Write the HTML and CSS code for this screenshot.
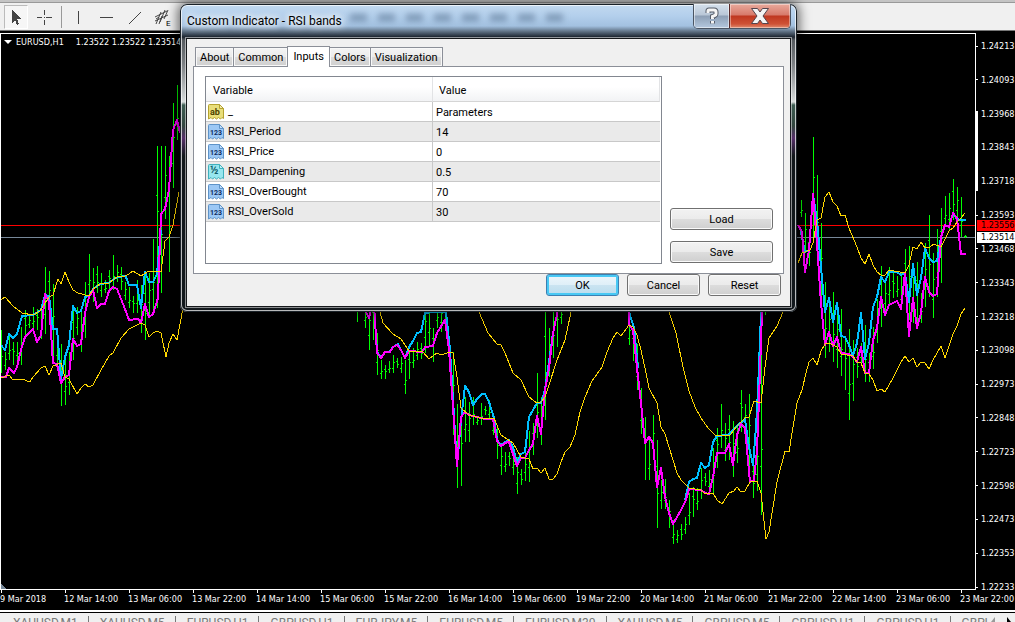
FILE: index.html
```html
<!DOCTYPE html>
<html lang="en">
<head>
    <meta charset="UTF-8">
    <meta name="viewport" content="width=device-width, initial-scale=1.0">
    <title>EURUSD,H1</title>
    <link rel="stylesheet" href="styles.css">
</head>
<body>

    <!-- Icon shapes used in the inputs table -->
    <svg class="sprite" aria-hidden="true">
        <symbol id="page" viewBox="0 0 16 16">
            <path class="page-fill" d="M.5 1.5q0-1 1-1h10l4 4v10l-1.500-1-1.500 1.500-2-1.500-2 1.500-2-1.500-2 1.500-1.500-1.500-2.500 1.500z"/>
            <path class="page-fold" d="M11.500.5v4h4z"/>
        </symbol>
    </svg>

    <!-- Drawing toolbar -->
    <div class="toolbar">
        <button class="tool active" aria-label="Cursor">
            <svg width="24" height="24" viewBox="0 0 24 24"><path fill="#444" d="M7 4v13l3-3 2 5 2-1-2-5h4z"/></svg>
        </button>
        <button class="tool" aria-label="Crosshair">
            <svg width="24" height="24" viewBox="0 0 24 24"><path d="M5 12.500h5M14 12.500h6M12.500 5v5M12.500 15v5M12 12.500h1"/></svg>
        </button>
        <span class="divider"></span>
        <button class="tool" aria-label="Vertical line">
            <svg width="24" height="24" viewBox="0 0 24 24"><path d="M12.500 6v13"/></svg>
        </button>
        <button class="tool" aria-label="Horizontal line">
            <svg width="24" height="24" viewBox="0 0 24 24"><path d="M6 12.500h13"/></svg>
        </button>
        <button class="tool" aria-label="Trendline">
            <svg width="24" height="24" viewBox="0 0 24 24"><path class="slant" d="M7 19L19 7"/></svg>
        </button>
        <button class="tool" aria-label="Equidistant channel">
            <svg width="24" height="24" viewBox="0 0 24 24"><path class="slant" d="M5 12L17 6M5 16L18 10M6 19L11 7M10 17L15 5M14 14L18 5M6 14l3-2M9 19l3-8"/><text x="16" y="21">E</text></svg>
        </button>
    </div>

    <!-- Chart window -->
    <div class="chart">
        <div class="plot">
            <svg id="plotSvg" class="plot-svg" viewBox="1 34 974 555" preserveAspectRatio="none">
                <path class="bid-line" d="M1 237.500H975"/>
                <path class="ask-line" d="M1 225.500H975"/>
                <path id="bars" class="bars"/>
                <path fill="#778899" d="M1 584v5h5z"/>
            </svg>
            <div class="symbol-info"><span class="caret"></span><span class="symbol">EURUSD,H1</span><span>1.23522 1.23522 1.23514</span></div>
        </div>
        <div class="prices">
            <span>1.24213</span>
            <span>1.24093</span>
            <span>1.23968</span>
            <span>1.23843</span>
            <span>1.23718</span>
            <span>1.23593</span>
            <span>1.23468</span>
            <span>1.23343</span>
            <span>1.23218</span>
            <span>1.23098</span>
            <span>1.22973</span>
            <span>1.22848</span>
            <span>1.22723</span>
            <span>1.22598</span>
            <span>1.22473</span>
            <span>1.22353</span>
            <span>1.22233</span>
            <i class="range"></i>
            <b class="price-tag ask">1.23556</b>
            <b class="price-tag bid">1.23514</b>
        </div>
        <div class="times">
            <span>9 Mar 2018</span>
            <span>12 Mar 14:00</span>
            <span>13 Mar 06:00</span>
            <span>13 Mar 22:00</span>
            <span>14 Mar 14:00</span>
            <span>15 Mar 06:00</span>
            <span>15 Mar 22:00</span>
            <span>16 Mar 14:00</span>
            <span>19 Mar 06:00</span>
            <span>19 Mar 22:00</span>
            <span>20 Mar 14:00</span>
            <span>21 Mar 06:00</span>
            <span>21 Mar 22:00</span>
            <span>22 Mar 14:00</span>
            <span>23 Mar 06:00</span>
            <span>23 Mar 22:00</span>
        </div>
    </div>

    <!-- Open charts -->
    <div class="chart-tabs">
        <a href="#">XAUUSD,M1</a>
        <a href="#">XAUUSD,M5</a>
        <a href="#">EURUSD,H1</a>
        <a href="#">GBPUSD,H1</a>
        <a href="#">EURJPY,M5</a>
        <a href="#">EURUSD,M5</a>
        <a href="#">EURUSD,M30</a>
        <a href="#">XAUUSD,M5</a>
        <a href="#">GBPUSD,M5</a>
        <a href="#">GBPUSD,H1</a>
        <a href="#">GBPUSD,H1</a>
        <a href="#">GBPU</a>
        <svg class="tab-arrows" width="27" height="9" viewBox="0 0 27 9"><path fill="#999" d="M7 4v5H3z"/><path fill="#000" d="M19 4l4 5h-4z"/></svg>
    </div>

    <!-- Indicator dialog -->
    <div class="dialog" role="dialog" aria-labelledby="dialogTitle">
        <div class="title-bar">
            <div class="glass"><i></i><i></i><i></i><i></i><i></i><i></i><i></i><i></i></div>
            <span id="dialogTitle" class="title">Custom Indicator - RSI bands</span>
            <div class="caption-btns">
                <button class="help-btn" aria-label="Help">
                    <svg width="16" height="18" viewBox="0 0 16 18"><path class="glyph-edge" d="M4 6V4q0-1 1-1h5q2 0 2 2v2q0 1-1 1.500L8.500 9.500V12M8.500 14v2.500"/><path class="glyph" d="M4 6V4q0-1 1-1h5q2 0 2 2v2q0 1-1 1.500L8.500 9.500V12M8.500 14v2.500"/></svg>
                </button>
                <button class="close-btn" aria-label="Close">
                    <svg width="18" height="16" viewBox="0 0 18 16"><path fill="#f4f4f4" stroke="#54444c" d="M.5.5h6L9 4l2.500-3.500h6L12 8l5.500 7.500h-6L9 12l-2.500 3.500h-6L6 8z"/></svg>
                </button>
            </div>
        </div>
        <div class="client">
            <div class="tabs" role="tablist">
                <button role="tab">About</button>
                <button role="tab">Common</button>
                <button role="tab" class="selected" aria-selected="true">Inputs</button>
                <button role="tab">Colors</button>
                <button role="tab">Visualization</button>
            </div>
            <div class="pane">
                <div class="list">
                    <table>
                        <thead>
                            <tr><th>Variable</th><th>Value</th></tr>
                        </thead>
                        <tbody>
                            <tr>
                                <td><svg class="type str" viewBox="0 0 16 16"><use href="#page"/><text x="2" y="11">ab</text></svg>_</td>
                                <td>Parameters</td>
                            </tr>
                            <tr>
                                <td><svg class="type int" viewBox="0 0 16 16"><use href="#page"/><text x="2" y="11">123</text></svg>RSI_Period</td>
                                <td>14</td>
                            </tr>
                            <tr>
                                <td><svg class="type int" viewBox="0 0 16 16"><use href="#page"/><text x="2" y="11">123</text></svg>RSI_Price</td>
                                <td>0</td>
                            </tr>
                            <tr>
                                <td><svg class="type dbl" viewBox="0 0 16 16"><use href="#page"/><text x="2" y="10">½</text></svg>RSI_Dampening</td>
                                <td>0.5</td>
                            </tr>
                            <tr>
                                <td><svg class="type int" viewBox="0 0 16 16"><use href="#page"/><text x="2" y="11">123</text></svg>RSI_OverBought</td>
                                <td>70</td>
                            </tr>
                            <tr>
                                <td><svg class="type int" viewBox="0 0 16 16"><use href="#page"/><text x="2" y="11">123</text></svg>RSI_OverSold</td>
                                <td>30</td>
                            </tr>
                        </tbody>
                    </table>
                </div>
                <div class="side-btns">
                    <button class="btn">Load</button>
                    <button class="btn">Save</button>
                </div>
            </div>
            <div class="footer">
                <button class="btn default">OK</button>
                <button class="btn">Cancel</button>
                <button class="btn">Reset</button>
            </div>
        </div>
    </div>

    <script src="chart.js"></script>
</body>
</html>
```

FILE: styles.css
```css
* {
    box-sizing: border-box;
}
body {
    margin: 0;
    height: 100vh;
    overflow: hidden;
    display: flex;
    flex-direction: column;
    background: #000;
    font-family: Roboto, "Liberation Sans", sans-serif;
    font-size: 11px;
    position: relative;
}
button {
    font: inherit;
    color: #000;
    padding: 0;
    margin: 0;
}
.sprite {
    position: absolute;
    width: 0;
    height: 0;
}

/* Toolbar */
.toolbar {
    height: 31px;
    flex: none;
    display: flex;
    align-items: center;
    gap: 4px;
    padding: 3px 4px 0;
    background: linear-gradient(#c4c4c4 2px, #999 2px, #999 3px, #f0f0f0 3px);
    border-bottom: 1px solid #777;
}
.tool {
    width: 24px;
    height: 24px;
    border: 0;
    background: none;
}
.tool.active {
    background: #f6f6f6;
    border: 1px solid #bbb;
    border-right-color: #fff;
    border-bottom-color: #fff;
}
.tool svg {
    display: block;
}
.tool path {
    stroke: #444;
    stroke-width: 1;
    fill: none;
    shape-rendering: crispEdges;
}
.tool .slant {
    shape-rendering: auto;
}
.tool.active path {
    fill: #444;
    stroke: none;
}
.tool text {
    font-size: 8px;
}
.divider {
    width: 1px;
    height: 22px;
    margin-left: 1px;
    background: #999;
}

/* Chart */
.chart {
    flex: 1;
    min-height: 0;
    display: grid;
    grid-template-columns: 1fr 39px;
    grid-template-rows: 1fr 20px;
    padding-top: 2px;
    background: #000;
    color: #fff;
    font-family: "DejaVu Sans Condensed", "DejaVu Sans", sans-serif;
    font-size: 9px;
    line-height: 12px;
}
.plot {
    position: relative;
    border: 1px solid #fff;
    min-height: 0;
}
.plot-svg {
    display: block;
    width: 100%;
    height: 100%;
    shape-rendering: crispEdges;
}
.plot-svg polyline {
    fill: none;
    stroke-linejoin: round;
}
.bars {
    fill: none;
    stroke: #0f0;
}
.blue {
    stroke: #00bfff;
    stroke-width: 2;
}
.pink {
    stroke: #f0f;
    stroke-width: 2;
}
.gold {
    stroke: #ffd700;
    stroke-width: 1;
}
.bid-line {
    stroke: #778899;
}
.ask-line {
    stroke: #f00;
}
.symbol-info {
    position: absolute;
    left: 3px;
    top: 2px;
    display: flex;
    align-items: center;
    gap: 4px;
    white-space: nowrap;
}
.symbol {
    margin-right: 8px;
}
.caret {
    border: 4px solid transparent;
    border-top-color: #fff;
    border-bottom: 0;
}
.prices {
    position: relative;
    display: flex;
    flex-direction: column;
    justify-content: space-between;
    padding-top: 7px;
    margin-bottom: -3px;
    min-height: 0;
}
.prices span {
    display: flex;
    align-items: center;
    gap: 3px;
}
.prices span::before {
    content: "";
    width: 2px;
    height: 1px;
    background: #fff;
}
.range {
    position: absolute;
    left: -1px;
    top: 78px;
    width: 3px;
    height: 80px;
    background: #fff;
}
.price-tag {
    position: absolute;
    left: 1px;
    right: 0;
    height: 11px;
    padding-left: 4px;
    line-height: 11px;
    font-weight: normal;
    color: #000;
}
.ask {
    top: 187px;
    background: #f00;
}
.bid {
    top: 199px;
    background: #fff;
}
.times {
    grid-column: 1 / 3;
    display: grid;
    grid-template-columns: repeat(15, 1fr) 55px;
    white-space: nowrap;
}
.times span::before {
    content: "";
    display: block;
    width: 1px;
    height: 3px;
    margin-left: 1px;
    background: #fff;
}

/* Chart tabs */
.chart-tabs {
    flex: none;
    height: 12px;
    display: flex;
    overflow: hidden;
    position: relative;
    border-top: 2px solid #fff;
    background: linear-gradient(#000 1px, #f0f0f0 1px);
    padding: 4px 0 0 2px;
    line-height: 14px;
    font-size: 12px;
}
.chart-tabs a {
    flex: none;
    padding: 0 10px 0 11px;
    color: #777;
    text-decoration: none;
    border-right: 1px solid #777;
}
.tab-arrows {
    position: absolute;
    right: 0;
    top: 1px;
    background: #f0f0f0;
}

/* Dialog */
.dialog {
    position: absolute;
    left: 180px;
    top: 4px;
    width: 617px;
    padding: 0 6px 5px;
    border-radius: 7px;
    box-shadow: inset 0 0 0 1px #1b2228, inset 0 0 0 2px rgba(255, 255, 255, 0.7), 0 0 12px 2px rgba(0, 0, 0, 0.6);
    background: linear-gradient(#c4daf0, #b3cfec 12px, #a3c1e0 22px, #65788c 27px, #1c2530 33px, #565b60 36px, #7c8084 60px, #d8dcdc 98px, #3d5c52 101px, #33463f 122px, #57306a 134px, #12171b 152px, #12181c);
}
.title-bar {
    height: 34px;
    display: flex;
    justify-content: space-between;
    position: relative;
}
.title {
    position: relative;
    font-size: 12px;
    line-height: 16px;
    padding: 9px 0 0 1px;
    text-shadow: 0 0 6px #fff, 0 0 8px #fff, 0 0 10px #fff;
}
.glass {
    position: absolute;
    left: 164px;
    top: 10px;
    display: flex;
    gap: 11px;
    filter: blur(3px);
}
.glass i {
    width: 17px;
    height: 7px;
    background: rgba(70, 95, 125, 0.5);
}
.caption-btns {
    display: flex;
    height: 25px;
    position: relative;
    border: 1px solid #4b5563;
    border-top: 0;
    border-radius: 0 0 5px 5px;
    overflow: hidden;
}
.caption-btns button {
    border: 0;
    display: flex;
    align-items: center;
    justify-content: center;
}
.help-btn {
    width: 35px;
    background: linear-gradient(#d5e0ec, #b9c7d7 11px, #8d9fb5 12px, #b4c8df);
    box-shadow: inset 0 0 0 1px rgba(255, 255, 255, 0.5);
}
.caption-btns .close-btn {
    width: 61px;
    background: linear-gradient(#e9aa9c, #d7796a 11px, #bf3720 12px, #cf5236 20px, #e08c70);
    border-left: 1px solid #5a2a2a;
    box-shadow: inset 0 0 0 1px rgba(255, 255, 255, 0.4);
}
.glyph-edge {
    fill: none;
    stroke: #565c68;
    stroke-width: 5;
}
.glyph {
    fill: none;
    stroke: #f4f4f4;
    stroke-width: 3;
}
.client {
    border: 1px solid #15181b;
    outline: 1px solid rgba(255, 255, 255, 0.5);
    background: #f0f0f0;
    padding: 7px 6px 0;
}
.tabs {
    display: flex;
    align-items: flex-end;
    height: 21px;
    padding-left: 2px;
    margin-bottom: -1px;
    position: relative;
}
.tabs button {
    height: 19px;
    margin-bottom: 1px;
    padding: 1px 4px 0;
    border: 1px solid #8b8f98;
    border-bottom: 0;
    margin-right: -1px;
    background: linear-gradient(#f4f4f4, #ebebeb 9px, #dcdcdc 9px, #cfcfcf);
    box-shadow: inset 0 0 0 1px #f8f8f8;
}
.tabs .selected {
    height: 21px;
    margin-bottom: 0;
    padding: 0 5px 1px;
    background: #fff;
    box-shadow: none;
}
.pane {
    display: flex;
    gap: 8px;
    border: 1px solid #8b8f98;
    background: #fff;
    padding: 9px 10px 9px 11px;
}
.list {
    flex: 1;
    height: 188px;
    border: 1px solid #828790;
    padding-right: 1px;
}
table {
    width: 100%;
    border-collapse: separate;
    border-spacing: 0;
    table-layout: fixed;
}
th {
    height: 25px;
    padding: 2px 6px 0;
    text-align: left;
    font-weight: normal;
    background: linear-gradient(#fff 10px, #f2f3f5);
    border-bottom: 1px solid #d5d5d5;
    border-right: 1px solid #e2e3e5;
}
th:first-child {
    padding-left: 7px;
}
td {
    height: 20px;
    padding: 1px 3px 0;
    border-bottom: 1px solid #c8c8c8;
}
td:first-child {
    border-right: 1px solid #c8c8c8;
    padding-left: 2px;
}
tbody tr:nth-child(even) {
    background: #eaeaea;
}
.type {
    width: 16px;
    height: 16px;
    margin-right: 4px;
    vertical-align: middle;
}
.type text {
    font-size: 7px;
    font-weight: bold;
}
.page-fill,
.page-fold {
    stroke: currentColor;
}
.page-fold {
    fill: rgba(255, 255, 255, 0.4);
}
.str {
    color: #b5a22e;
    fill: #e9de7a;
}
.str text {
    font-size: 9px;
    fill: #4c4200;
}
.int {
    color: #5e93c8;
    fill: #9cc8f5;
}
.int text {
    fill: #0d2c60;
}
.dbl {
    color: #3fb0bd;
    fill: #97e6ee;
}
.dbl text {
    font-size: 11px;
    fill: #0e5a66;
}
.side-btns {
    width: 103px;
    display: flex;
    flex-direction: column;
    justify-content: flex-end;
    gap: 11px;
    padding-bottom: 1px;
}
.btn {
    height: 22px;
    border: 1px solid #707070;
    border-radius: 3px;
    background: linear-gradient(#f2f2f2, #ebebeb 10px, #dddddd 10px, #cfcfcf);
    box-shadow: inset 0 0 0 1px #fafafa;
}
.btn.default {
    border-color: #3c7fb1;
    background: linear-gradient(#eef6fb, #dfeff8 10px, #cbe4f1 10px, #b9dcee);
    box-shadow: inset 0 0 0 2px #48c8f4;
}
.footer {
    display: flex;
    justify-content: flex-end;
    gap: 8px;
    height: 32px;
    padding-right: 3px;
}
.footer .btn {
    width: 73px;
}
```

FILE: chart.js
```js
const svg = document.getElementById("plotSvg");

// x, high, low
const bars = `
1,330,373 5,352,370 9,335,360 13,342,365 17,342,360 21,327,365 25,310,335 29,315,328 33,307,330 37,309,330
41,310,339 45,267,334 49,271,303 53,284,364 57,330,365 61,344,406 65,357,405 69,352,395 73,305,360 77,307,335
81,310,352 85,282,338 89,254,297 93,268,302 97,266,293 101,273,297 105,280,293 109,270,290 113,255,290 117,265,282
121,267,290 125,282,300 129,287,308 133,296,313 137,280,313 141,285,333 145,273,340 149,273,315 153,239,310
157,146,308 161,146,293 165,146,219 169,156,272 173,103,188 177,85,140
357,300,322 365,300,328 369,300,350 373,300,340 377,333,375 381,360,379 385,365,379 389,361,373 393,355,373
397,358,368 401,357,373 405,360,394 409,350,379 413,348,368 417,342,360 421,343,359 425,300,353 429,300,346
433,328,362 437,300,328 441,300,332 445,300,330 453,352,435 457,404,488 461,415,486 465,397,442 469,402,442
473,397,425 477,416,425 481,403,425 485,406,415 489,400,420 493,417,435 497,425,459 501,443,475 505,452,472
509,452,466 513,447,475 517,457,494 521,469,485 525,452,481 529,431,482 533,423,455 537,373,438 541,397,445
545,300,420 549,328,377 553,300,358 557,300,347 561,300,324
629,320,345 633,328,361 637,344,390 641,388,434 645,417,480 649,440,480 653,415,460 657,440,528 661,480,509
665,479,509 669,500,528 673,520,544 677,530,543 681,524,540 685,517,534 689,493,525 693,487,517 697,488,510
701,468,499 705,473,486 709,470,493 713,448,493 717,428,468 721,404,448 725,423,461 729,415,460 733,421,477
737,425,463 741,390,432 745,404,423 749,394,472 753,460,498 757,433,491 761,350,515 765,300,315
801,200,217 805,213,253 809,232,266 813,137,238 817,175,253 821,223,310 825,282,358 829,297,352 833,292,362
837,303,368 841,309,376 845,337,390 849,329,420 853,340,401 857,348,378 861,343,363 865,325,382 869,353,382
873,327,369 877,299,343 881,266,327 885,280,313 889,267,305 893,273,298 897,276,297 901,272,310 905,249,295
909,246,320 913,277,323 917,262,323 921,293,323 925,243,307 929,215,297 933,253,318 937,229,297 941,208,283
945,196,227 949,193,230 953,179,220 957,187,220 961,197,237 965,235,238`;

const lines = [
    ["blue", "1,345 5,350 9,334 13,338 17,334 22,316 33,315 41,310 45,295 49,296 53,329 57,329 61,379 65,357 69,345 73,306 77,313 81,311 85,297 89,296 93,289 100,284 109,283 115,278 124,276 126,277 129,285 137,285 141,308 145,272 149,282 153,282 157,274 161,230"],
    ["blue", "374,305 377,352 381,358 385,352 389,352 393,347 398,344 401,350 405,358 409,347 413,341 417,333 421,332 425,313 433,312 446,312 450,350 457,466 461,420 465,386 469,392 473,405 477,399 482,394 485,394 489,402 494,418 497,440 501,445 505,442 509,440 513,447 517,463 521,454 525,452 529,417 537,403 541,403 545,390 553,333 559,305"],
    ["blue", "629,312 634,328 638,368"],
    ["blue", "685,500 689,482 693,479 697,478 701,463 705,468 709,465 713,442 717,436 728,435 737,426 745,419 749,447 753,465 756,427 758,390 760,340 761,312"],
    ["blue", "800,227 805,252 809,250 813,195 817,220 821,267 825,312 829,298 833,322 837,303 841,336 845,337 849,345 853,356 857,343 861,313 865,359 869,343 873,307 877,297 881,277 885,282 889,272 897,272 901,275 905,273 909,302 913,264 917,295 921,278 925,248 929,258 933,262 937,261 941,237 945,225 949,227 953,213 957,219 961,220 966,220"],
    ["pink", "1,377 6,377 9,368 14,373 17,367 21,350 25,337 33,329 37,342 41,335 45,294 49,302 53,363 57,364 61,383 65,377 69,375 73,339 77,346 81,344 85,313 89,297 93,290 97,308 101,304 105,304 109,291 113,287 117,289 125,309 129,320 138,319 141,323 145,304 149,317 153,314 158,298 161,214 165,209 169,190 173,130 177,120 180,133"],
    ["pink", "365,310 369,318 371,308"],
    ["pink", "374,305 377,353 381,358 385,352 390,352 393,347 397,345 401,350 405,358 409,351 422,352 425,347 433,346 437,333 445,320 449,350 453,407 457,466 461,417 465,412 469,415 477,417 485,419 493,419 497,441 501,446 507,442 509,442 513,454 517,466 521,458 525,458 529,450 533,444 537,416 541,434 545,390 549,368 553,333 559,305"],
    ["pink", "629,312 629,325 633,330 637,368 641,403 645,443 649,437 653,443 657,487 661,468 665,497 669,513 673,524 681,510 686,500 689,489 701,490 705,493 709,494 713,477 717,453 725,453 729,444 733,465 737,435 741,424 745,428 750,482 754,480 757,450 759,400 762,312"],
    ["pink", "798,225 802,232 805,272 809,250 813,194 817,243 821,303 825,345 829,332 833,346 837,337 841,353 849,354 853,357 857,362 861,347 865,373 869,373 873,340 877,328 881,297 885,315 889,305 897,301 901,309 905,273 909,336 913,298 917,328 921,313 925,277 929,292 933,296 937,294 941,237 945,225 949,227 953,213 957,218 961,254 966,254"],
    ["gold", "1,300 5,297 13,306 22,313 33,315 40,311 49,297 53,295 58,279 61,284 65,272 69,282 73,290 78,293 89,296 93,289 100,284 109,283 117,277 125,276 129,274 133,271 141,276 147,272 153,271 161,272 165,241 169,237 173,225 179,192"],
    ["gold", "1,378 9,375 13,380 22,379 30,382 33,377 41,368 45,366 49,375 53,366 61,363 65,377 69,379 77,394 81,388 85,384 89,387 93,385 101,370 109,356 113,353 121,338 129,329 141,323 145,325 149,337 153,333 157,331 161,333 166,357 169,343 173,334 177,340 183,308"],
    ["gold", "380,312 383,323 393,334 401,339 409,351 423,352 429,359 437,353 441,355 450,352 453,353 457,377 461,408 469,415 485,419 494,418 501,435 507,439 513,443 517,450 521,457 529,459 533,469 537,468 541,473 545,468 549,479 553,479 557,474 561,462 565,452 570,447 575,435 580,412 585,397 592,381 602,367 607,352 613,338 617,332 621,336 629,325 633,327 637,335 641,350 645,368 649,388 657,403 661,427 665,434 669,447 677,473 681,480 689,488 701,490 705,494 713,493 717,500 722,504 729,493 734,491 737,487 741,492 745,491 750,482 757,481 761,493 766,539 769,532 773,507 777,482 785,451 789,452 793,427 797,403 802,390 806,373 809,362 813,358 817,365 821,351 825,344 829,343 837,347 841,354 853,356 857,362 861,363 865,373 869,374 873,380 877,391 881,389 885,392 889,385 893,378 901,362 905,356 909,362 913,358 917,367 921,362 925,363 929,369 933,360 941,346 945,358 953,334 957,326 961,314 965,308"],
    ["gold", "479,312 488,333 497,344 501,345 505,353 513,373 521,380 529,397 537,403 541,402 545,397 549,385 557,360 565,340 570,317 571,310"],
    ["gold", "669,312 676,333 683,367 689,391 695,407 701,418 708,428 715,435 723,436 730,435 737,426 745,418 749,417 754,401 761,403 765,367 769,338 777,326 783,312"],
    ["gold", "798,263 802,253 810,250 813,243 817,220 821,218 825,197 829,192 833,202 837,206 841,216 845,215 849,228 857,247 861,258 865,264 869,254 873,265 877,272 881,275 885,275 889,270 905,273 909,265 913,247 917,249 921,242 925,248 930,247 934,244 941,247 949,231 953,228 957,222 961,218 965,213"]
];

// Price bars: range plus open (left) and close (right) ticks
let d = "";
bars.trim().split(/\s+/).forEach((item, i) => {
    const [x, high, low] = item.split(",").map(Number);
    const range = low - high;
    const open = Math.round(high + range * (i % 3 === 0 ? 0.3 : 0.7));
    const close = Math.round(high + range * (i % 2 === 0 ? 0.6 : 0.4));
    d += `M${x + 0.5} ${high}V${low}M${x - 1} ${open + 0.5}h1M${x + 1} ${close + 0.5}h1`;
});
document.getElementById("bars").setAttribute("d", d);

lines.forEach(([name, points]) => {
    const line = document.createElementNS("http://www.w3.org/2000/svg", "polyline");
    line.setAttribute("class", name);
    line.setAttribute("points", points);
    svg.appendChild(line);
});
```
